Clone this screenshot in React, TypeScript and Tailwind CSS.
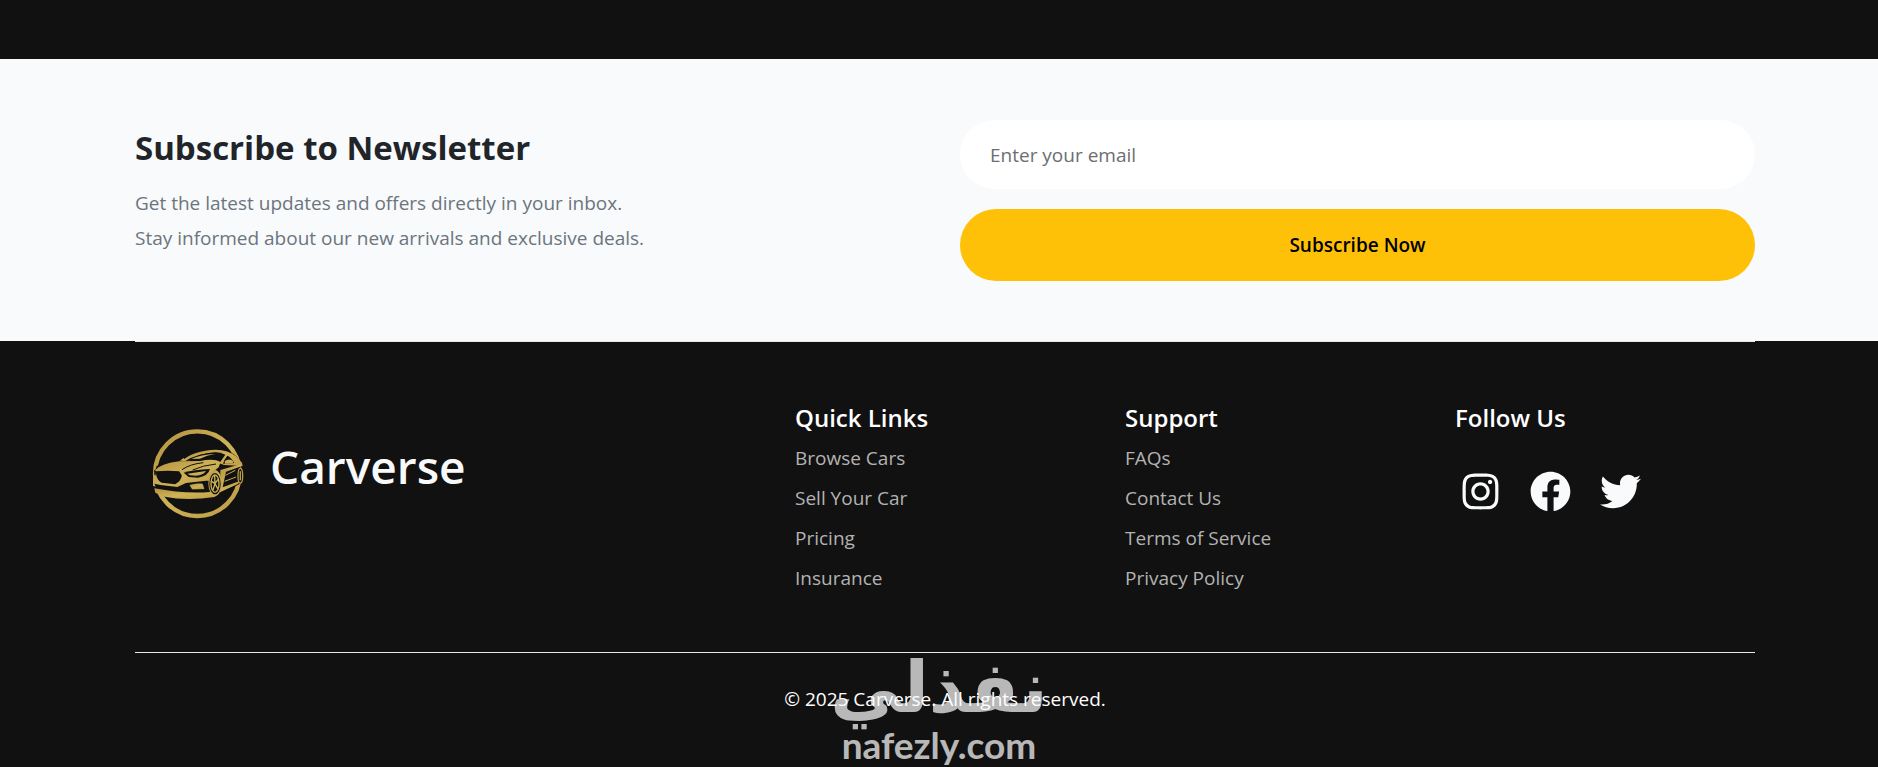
import React, { useState } from 'react';
import { FaInstagram, FaFacebook, FaTwitter } from 'react-icons/fa';

interface LinkColumn {
  title: string;
  links: string[];
}

const columns: LinkColumn[] = [
  { title: 'Quick Links', links: ['Browse Cars', 'Sell Your Car', 'Pricing', 'Insurance'] },
  { title: 'Support', links: ['FAQs', 'Contact Us', 'Terms of Service', 'Privacy Policy'] },
];

const socials = [
  { name: 'Instagram', Icon: FaInstagram },
  { name: 'Facebook', Icon: FaFacebook },
  { name: 'Twitter', Icon: FaTwitter },
];

const CarLogo: React.FC = () => (
  <svg viewBox="-15 0 345 315" className="w-[115px] h-[105px] shrink-0" fill="none" aria-hidden="true">
    <defs>
      <linearGradient id="gold" x1="0" y1="0" x2="1" y2="1">
        <stop offset="0" stopColor="#b5923f" />
        <stop offset="0.5" stopColor="#cdb257" />
        <stop offset="1" stopColor="#bd9b44" />
      </linearGradient>
    </defs>
    <circle cx="172" cy="161" r="127" stroke="url(#gold)" strokeWidth="13" />
    {/* body silhouette */}
    <path d="M43 160 L50 138 L110 118 Q150 88 225 86 Q268 86 292 112 L301 128 L303 190 L240 222 L120 232 L46 216 Z" fill="#111" />
    {/* roof */}
    <path d="M124 124 Q160 91 228 89 Q264 89 290 110 L306 128 L308 138 L252 135 L238 130 L256 104 Q240 96 222 97 Q176 100 148 122 Z" fill="url(#gold)" />
    <path d="M262 107 Q253 118 249 131 L282 129 Q274 112 262 107 Z" fill="#111" />
    <path d="M254 123 Q268 113 280 124 L278 130 L255 131 Z" fill="url(#gold)" />
    {/* windshield */}
    <path d="M136 123 Q172 99 232 98 L251 104 L236 126 Q192 118 136 123 Z" fill="#111" />
    <path d="M154 117 Q182 103 226 102 Q200 106 180 116 Z" fill="url(#gold)" />
    {/* mirror */}
    <path d="M119 122 L131 114 L137 122 Z" fill="url(#gold)" />
    {/* hood */}
    <path d="M39 166 L46 150 Q64 130 118 124 L180 123 Q222 114 242 126 L236 142 Q216 154 208 190 L206 206 Q160 210 110 206 L39 198 Z" fill="url(#gold)" />
    <path d="M126 149 Q150 132 190 128 M158 150 Q188 136 228 132" stroke="#111" strokeWidth="3" />
    {/* grille */}
    <path d="M50 156 Q84 153 116 156 L123 167 Q120 183 105 190 L66 186 Q52 180 50 156 Z" fill="#111" stroke="#111" strokeWidth="5" />
    {/* headlights */}
    <path d="M131 158 Q162 149 210 147 Q204 169 174 173 L146 171 Z" fill="#111" />
    <path d="M142 161 L198 153 Q190 166 168 167 L150 166 Z" fill="url(#gold)" />
    <path d="M42 150 L48 153 L47 167 L43 163 Z" fill="#111" />
    {/* bumper */}
    <path d="M43 191 L62 195 L112 201 L138 189 L198 182 L210 182 L207 213 Q122 221 50 207 Z" fill="#111" />
    <path d="M150 196 Q168 190 187 192 L192 206 L157 207 Z" fill="url(#gold)" stroke="#cdb257" strokeWidth="2" />
    <path d="M43 205 Q130 222 210 216 Q224 230 242 216 L224 231 Q140 244 74 230 L46 218 Z" fill="url(#gold)" />
    {/* flank */}
    <path d="M241 150 L304 132 L304 139 L258 155 L248 202 L297 184 L295 191 L240 217 Z" fill="url(#gold)" />
    <path d="M256 166 L286 151 M254 184 L288 171" stroke="url(#gold)" strokeWidth="3" />
    {/* wheels */}
    <ellipse cx="225" cy="189" rx="20" ry="39" fill="url(#gold)" />
    <ellipse cx="225" cy="191" rx="17" ry="32" fill="#111" />
    <ellipse cx="225" cy="191" rx="12" ry="26" stroke="#cdb257" strokeWidth="4" />
    <path d="M225 191 L224 168 M225 191 L234 178 M225 191 L233 206 M225 191 L219 210 M225 191 L215 184" stroke="#cdb257" strokeWidth="4" />
    <ellipse cx="301" cy="167" rx="7" ry="22" fill="#111" stroke="#bd9b44" strokeWidth="4" />
    <path d="M301 154 V181" stroke="#bd9b44" strokeWidth="4" />
  </svg>
);

const Newsletter: React.FC = () => {
  const [email, setEmail] = useState('');

  const handleSubmit = (e: React.FormEvent) => {
    e.preventDefault();
    setEmail('');
  };

  return (
    <section className="bg-[#f8fafc] pl-[135px] pr-[123px] pt-[61px] pb-[60px] grid grid-cols-2 gap-[30px]">
      <div className="pt-[6px]">
        <h2 className="text-[33px] leading-[44px] font-bold text-[#212529] mb-4">Subscribe to Newsletter</h2>
        <p className="text-[19px] leading-[35px] text-[#6c757d]">
          Get the latest updates and offers directly in your inbox.
          <br />
          Stay informed about our new arrivals and exclusive deals.
        </p>
      </div>
      <form onSubmit={handleSubmit} className="flex flex-col gap-5">
        <input
          type="email"
          aria-label="Enter your email"
          placeholder="Enter your email"
          value={email}
          onChange={e => setEmail(e.target.value)}
          className="h-[69px] rounded-full bg-white px-[30px] text-[19px] text-[#212529] placeholder:text-[#6b6e72] outline-none"
        />
        <button type="submit" className="h-[72px] rounded-full bg-[#ffc107] text-[19px] font-semibold text-black">
          Subscribe Now
        </button>
      </form>
    </section>
  );
};

const Footer: React.FC = () => (
  <footer className="pl-[135px] pr-[123px] text-white">
    <div className="border-t border-[#e5e7e9] pt-[60px] pb-[54px] grid grid-cols-5 gap-[30px]">
      <div className="col-span-2 flex items-start pt-[18px] gap-5">
        <CarLogo />
        <span className="text-[46px] leading-[92px] font-semibold text-[#f8f9fa]">Carverse</span>
      </div>
      {columns.map(col => (
        <div key={col.title}>
          <h5 className="text-[24px] leading-[32px] font-semibold mb-1">{col.title}</h5>
          <ul>
            {col.links.map(link => (
              <li key={link} className="h-10 flex items-center">
                <a href="#" className="text-[19px] leading-[30px] text-[#b3b3b3] hover:text-white">{link}</a>
              </li>
            ))}
          </ul>
        </div>
      ))}
      <div>
        <h5 className="text-[24px] leading-[32px] font-semibold">Follow Us</h5>
        <div className="flex gap-5 mt-8">
          {socials.map(({ name, Icon }) => (
            <a key={name} href="#" aria-label={name} className="size-[50px] flex items-center justify-center text-[#f8fafc]">
              <Icon size={41} />
            </a>
          ))}
        </div>
      </div>
    </div>
    <div className="border-t border-[#e5e7e9] pt-[30px] pb-[50px]">
      <p className="text-center text-[19px] leading-[32px]">© 2025 Carverse. All rights reserved.</p>
    </div>
  </footer>
);

const Watermark: React.FC = () => (
  <div className="absolute inset-x-0 top-[650px] flex flex-col items-center text-white opacity-70 pointer-events-none">
    <span dir="rtl" className="font-['DejaVu_Sans',sans-serif] font-bold text-[71px] leading-[76px]">نفذلي</span>
    <span className="font-['Lato',sans-serif] font-bold text-[37px] leading-[38px]">nafezly.com</span>
  </div>
);

const App: React.FC = () => (
  <div className="relative min-h-screen overflow-hidden bg-[#111] pt-[59px] font-['Open_Sans','Noto_Sans',sans-serif]">
    <Newsletter />
    <Footer />
    <Watermark />
  </div>
);

export default App;
